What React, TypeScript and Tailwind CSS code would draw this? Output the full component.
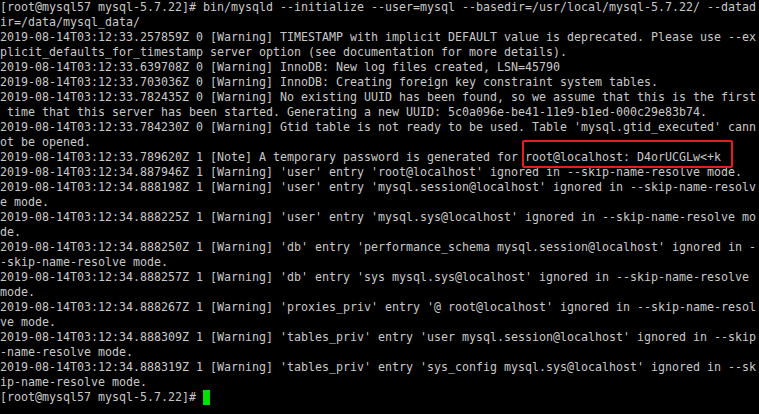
import React from "react";

const before: string[] = [
  "[root@mysql57 mysql-5.7.22]# bin/mysqld --initialize --user=mysql --basedir=/usr/local/mysql-5.7.22/ --datad",
  "ir=/data/mysql_data/",
  "2019-08-14T03:12:33.257859Z 0 [Warning] TIMESTAMP with implicit DEFAULT value is deprecated. Please use --ex",
  "plicit_defaults_for_timestamp server option (see documentation for more details).",
  "2019-08-14T03:12:33.639708Z 0 [Warning] InnoDB: New log files created, LSN=45790",
  "2019-08-14T03:12:33.703036Z 0 [Warning] InnoDB: Creating foreign key constraint system tables.",
  "2019-08-14T03:12:33.782435Z 0 [Warning] No existing UUID has been found, so we assume that this is the first",
  " time that this server has been started. Generating a new UUID: 5c0a096e-be41-11e9-b1ed-000c29e83b74.",
  "2019-08-14T03:12:33.784230Z 0 [Warning] Gtid table is not ready to be used. Table 'mysql.gtid_executed' cann",
  "ot be opened.",
];

const after: string[] = [
  "2019-08-14T03:12:34.887946Z 1 [Warning] 'user' entry 'root@localhost' ignored in --skip-name-resolve mode.",
  "2019-08-14T03:12:34.888198Z 1 [Warning] 'user' entry 'mysql.session@localhost' ignored in --skip-name-resolv",
  "e mode.",
  "2019-08-14T03:12:34.888225Z 1 [Warning] 'user' entry 'mysql.sys@localhost' ignored in --skip-name-resolve mo",
  "de.",
  "2019-08-14T03:12:34.888250Z 1 [Warning] 'db' entry 'performance_schema mysql.session@localhost' ignored in -",
  "-skip-name-resolve mode.",
  "2019-08-14T03:12:34.888257Z 1 [Warning] 'db' entry 'sys mysql.sys@localhost' ignored in --skip-name-resolve",
  "mode.",
  "2019-08-14T03:12:34.888267Z 1 [Warning] 'proxies_priv' entry '@ root@localhost' ignored in --skip-name-resol",
  "ve mode.",
  "2019-08-14T03:12:34.888309Z 1 [Warning] 'tables_priv' entry 'user mysql.session@localhost' ignored in --skip",
  "-name-resolve mode.",
  "2019-08-14T03:12:34.888319Z 1 [Warning] 'tables_priv' entry 'sys_config mysql.sys@localhost' ignored in --sk",
  "ip-name-resolve mode.",
];

export default function App() {
  return (
    <div className="w-[759px] h-[414px] overflow-hidden bg-black text-[#c8c8c8] font-['DejaVu_Sans_Mono',monospace] text-[11.63px] leading-[15px]">
      {before.map((l, i) => (
        <div key={"b" + i} className="whitespace-pre h-[15px]">{l}</div>
      ))}
      <div className="whitespace-pre h-[15px]">
        {"2019-08-14T03:12:33.789620Z 1 [Note] A temporary password is generated for "}
        <span className="relative">
          {"root@localhost: D4orUCGLw<+k"}
          <span className="absolute left-[-3px] top-[-10px] w-[211px] h-[28px] border-2 border-[#e81c1c] rounded-[2px]"></span>
        </span>
      </div>
      {after.map((l, i) => (
        <div key={"a" + i} className="whitespace-pre h-[15px]">{l}</div>
      ))}
      <div className="whitespace-pre h-[15px] flex items-center">
        <span>{"[root@mysql57 mysql-5.7.22]# "}</span>
        <span className="inline-block w-[7px] h-[15px] bg-[#00e000]"></span>
      </div>
    </div>
  );
}
